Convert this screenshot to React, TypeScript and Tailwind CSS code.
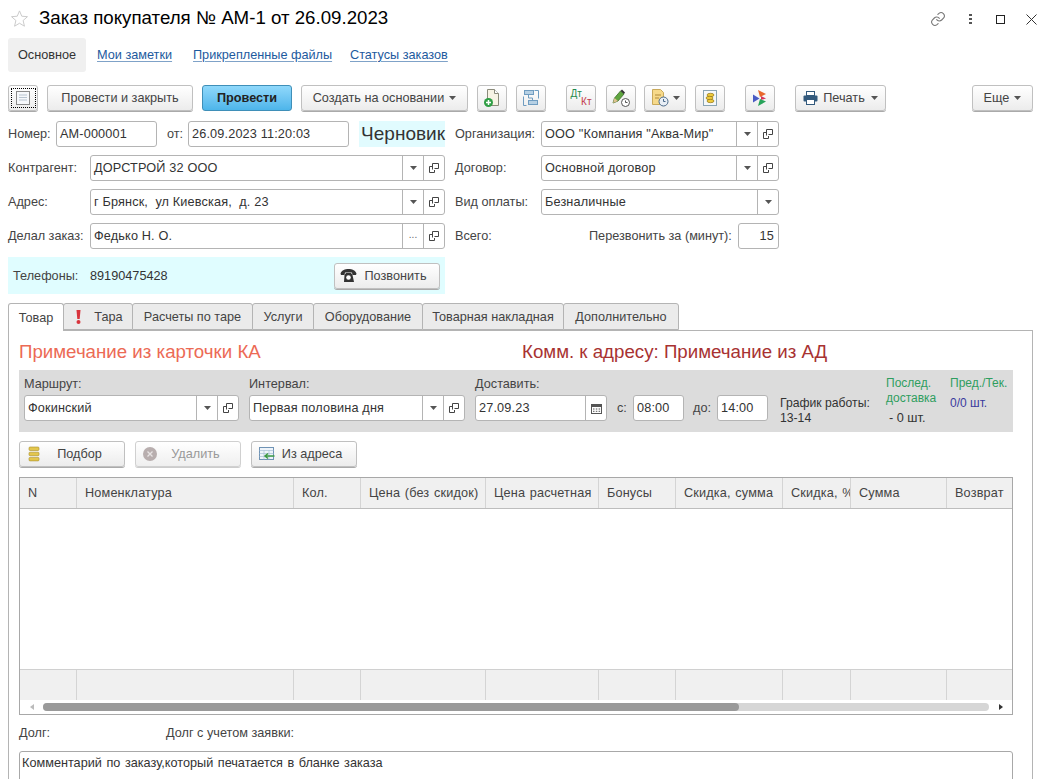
import React from "react";

const F = "font-['Liberation_Sans',Arial,sans-serif]";

function Caret({ className = "" }: { className?: string }) {
  return (
    <svg width="7" height="4" viewBox="0 0 7 4" className={className}>
      <path d="M0 0h7L3.5 4z" fill="#555" />
    </svg>
  );
}

function OpenIcon() {
  return (
    <svg width="10" height="10" viewBox="0 0 10 10" fill="none" stroke="#444" strokeWidth="1">
      <path d="M3.5 6.500V.5h6v5h-4" />
      <path d="M3.5 3.500H.5v6h5V7" />
    </svg>
  );
}

function Field({
  w,
  text,
  btns = [],
  right = false,
}: {
  w: string;
  text: string;
  btns?: string[];
  right?: boolean;
}) {
  return (
    <div className={`${w} h-[26px] flex shrink-0 rounded-[3px] border border-[#b4b4b4] bg-white text-[#333] overflow-hidden`}>
      <div className={`flex-1 min-w-0 pl-[3px] pr-[4px] leading-[24px] tracking-[0.15px] whitespace-pre ${right ? "text-right" : ""}`}>{text}</div>
      {btns.map((b, i) => (
        <div key={i} className="w-[21px] shrink-0 border-l border-[#b4b4b4] flex items-center justify-center">
          {b === "c" && <Caret />}
          {b === "o" && <OpenIcon />}
          {b === "d" && <span className="text-[10px] text-[#666] leading-none pb-[2px]">...</span>}
          {b === "k" && (
            <svg width="11" height="11" viewBox="0 0 11 11">
              <rect x="0.5" y="1.5" width="10" height="9" fill="none" stroke="#555" />
              <rect x="0.5" y="1.5" width="10" height="2.5" fill="#555" />
              <path d="M2 6h1.5M4.800 6h1.500M7.600 6h1.500M2 8.300h1.500M4.800 8.300h1.500M7.600 8.300h1.500" stroke="#555" />
            </svg>
          )}
        </div>
      ))}
    </div>
  );
}

function Btn({
  w,
  children,
  blue = false,
  disabled = false,
  className = "",
}: {
  w: string;
  children?: React.ReactNode;
  blue?: boolean;
  disabled?: boolean;
  className?: string;
}) {
  return (
    <div
      className={`${w} h-[26px] shrink-0 flex items-center justify-center rounded-[3px] border whitespace-nowrap ${
        blue
          ? "border-[#3f8fb8] bg-gradient-to-b from-[#8fd8fb] to-[#4db5ea] font-bold text-[#222]"
          : disabled
          ? "border-[#d0d0d0] bg-gradient-to-b from-[#ffffff] to-[#efefef] text-[#999] shadow-[0_1px_0_#ccc]"
          : "border-[#c0c0c0] bg-gradient-to-b from-[#ffffff] to-[#ececec] text-[#444] shadow-[0_1px_0_#aaa]"
      } ${className}`}
    >
      {children}
    </div>
  );
}

function Tab({ w, children, active = false }: { w: string; children: React.ReactNode; active?: boolean }) {
  return (
    <div
      className={`${w} shrink-0 flex items-center justify-center rounded-t-[3px] border border-[#b4b4b4] ${
        active ? "h-[28px] bg-white border-b-0 relative z-10 mb-[-1px]" : "h-[27px] bg-[#ebebeb] -ml-px"
      } text-[#444]`}
    >
      {children}
    </div>
  );
}

const cols = [
  { w: "w-[57px]", t: "N" },
  { w: "w-[217px]", t: "Номенклатура" },
  { w: "w-[67px]", t: "Кол." },
  { w: "w-[125px]", t: "Цена (без скидок)" },
  { w: "w-[113px]", t: "Цена расчетная" },
  { w: "w-[77px]", t: "Бонусы" },
  { w: "w-[107px]", t: "Скидка, сумма" },
  { w: "w-[68px]", t: "Скидка, %" },
  { w: "w-[96px]", t: "Сумма" },
  { w: "flex-1", t: "Возврат" },
];

export default function App() {
  return (
    <div className={`${F} w-[1037px] h-[779px] overflow-hidden bg-white text-[12.7px] leading-[20px] text-[#444] relative`}>
      {/* title */}
      <div className="h-[38px] flex items-center pl-[10px] pb-[2px]">
        <svg width="19" height="19" viewBox="0 0 20 20" fill="none" stroke="#c8c8c8" strokeWidth="1">
          <path d="M10 2l2.400 5.600 6 .5-4.600 4 1.400 6L10 15l-5.200 3.100 1.400-6-4.600-4 6-.5z" />
        </svg>
        <div className="ml-[10px] text-[18.7px] text-black">Заказ покупателя № АМ-1 от 26.09.2023</div>
        <div className="ml-auto flex items-center pt-[2px]">
          <svg width="16" height="16" viewBox="0 0 24 24" fill="none" stroke="#777" strokeWidth="1.600" strokeLinecap="round" className="mr-[23px]">
            <path d="M10 13a5 5 0 0 0 7.500.5l3-3a5 5 0 0 0-7-7l-1.700 1.700" />
            <path d="M14 11a5 5 0 0 0-7.500-.5l-3 3a5 5 0 0 0 7 7l1.700-1.700" />
          </svg>
          <div className="flex flex-col gap-[2px] mr-[24px]">
            <span className="w-[3px] h-[2px] bg-[#555]" />
            <span className="w-[3px] h-[2px] bg-[#555]" />
            <span className="w-[3px] h-[2px] bg-[#555]" />
          </div>
          <div className="w-[9px] h-[9px] border border-[#222] mr-[21px]" />
          <svg width="11" height="11" viewBox="0 0 11 11" stroke="#333" strokeWidth="1">
            <path d="M.5.5l10 10M10.500.5l-10 10" />
          </svg>
        </div>
      </div>

      {/* sections */}
      <div className="h-[34px] flex items-center pl-[8px]">
        <div className="w-[78px] h-[34px] rounded-[3px] bg-[#f0f0f0] flex items-center justify-center text-[#333]">Основное</div>
        <div className="ml-[11px] w-[96px]"><span className="text-[#1d5a9e] underline decoration-[#7fa2c8] underline-offset-2">Мои заметки</span></div>
        <div className="w-[157px]"><span className="text-[#1d5a9e] underline decoration-[#7fa2c8] underline-offset-2">Прикрепленные файлы</span></div>
        <div><span className="text-[#1d5a9e] underline decoration-[#7fa2c8] underline-offset-2">Статусы заказов</span></div>
      </div>

      {/* toolbar */}
      <div className="mt-[13px] h-[26px] flex items-center pl-[8px] pr-[4px]">
        <Btn w="w-[30px]">
          <div className="w-[25px] h-[20px] border border-dotted border-black flex items-center justify-center">
            <svg width="14" height="14" viewBox="0 0 14 14">
              <rect x="0.500" y="0.500" width="13" height="13" fill="#f6f8fb" stroke="#8a8a8a" />
              <path d="M3 4h8M3 6.500h8M3 9h8" stroke="#b8c4d0" />
            </svg>
          </div>
        </Btn>
        <Btn w="w-[146px]" className="ml-[9px]">Провести и закрыть</Btn>
        <Btn w="w-[90px]" blue className="ml-[9px]">Провести</Btn>
        <Btn w="w-[167px]" className="ml-[9px]">
          Создать на основании <Caret className="ml-[5px]" />
        </Btn>
        <Btn w="w-[30px]" className="ml-[9px]">
          <svg width="18" height="20" viewBox="0 0 18 20">
            <path d="M4.500 1.500h7l4 4v12h-11z" fill="#f7f3e4" stroke="#8a8a7a" />
            <path d="M11.500 1.500v4h4" fill="#fff" stroke="#8a8a7a" />
            <circle cx="5.500" cy="14.500" r="4.500" fill="#2f9e44" />
            <path d="M5.500 12v5M3 14.500h5" stroke="#fff" strokeWidth="1.500" />
          </svg>
        </Btn>
        <Btn w="w-[30px]" className="ml-[9px]">
          <svg width="18" height="18" viewBox="0 0 18 18" fill="none">
            <rect x="2.500" y="1.500" width="9" height="4" fill="#b6d0e4" stroke="#6f9cc0" />
            <rect x="6.500" y="11.500" width="9" height="4" fill="#b6d0e4" stroke="#6f9cc0" />
            <path d="M1.500 7.500v9h3M12.500 1.500h4v8" stroke="#6f9cc0" />
            <path d="M6.500 5.500v3.500h4v2.500" stroke="#6f9cc0" />
          </svg>
        </Btn>
        <Btn w="w-[30px]" className="ml-[20px]">
          <div className="relative w-[21px] h-[18px] text-[10px] leading-none">
            <span className="absolute left-0 top-0 text-[#1f8a4c]">Дт</span>
            <span className="absolute right-0 top-[8px] text-[#c23b4b]">Кт</span>
          </div>
        </Btn>
        <Btn w="w-[30px]" className="ml-[10px]">
          <svg width="20" height="20" viewBox="0 0 20 20">
            <path d="M2 15l1.500-5 6-7 3.500 3-6 7z" fill="#5fa53f" stroke="#3c6e2a" strokeWidth="0.800" />
            <path d="M9.500 3l1.500-1.500 3 3-1 1.500z" fill="#333" />
            <path d="M2 15l1.500-5 3.500 3z" fill="#e0c090" />
            <circle cx="14.500" cy="14.500" r="4" fill="#fff" stroke="#555" />
            <path d="M14.500 12.500v2h2" fill="none" stroke="#555" />
          </svg>
        </Btn>
        <Btn w="w-[42px]" className="ml-[8px]">
          <svg width="20" height="20" viewBox="0 0 20 20">
            <path d="M2.500 1.500h8l3 3v12h-11z" fill="#f6d98a" stroke="#c9a95a" />
            <path d="M5 7h6M5 10h4" stroke="#b08a3a" />
            <circle cx="13.500" cy="13.500" r="4.500" fill="#e8eef5" stroke="#4a6a8a" />
            <path d="M13.500 11v2.500h2" fill="none" stroke="#4a6a8a" />
          </svg>
          <Caret className="ml-[3px]" />
        </Btn>
        <Btn w="w-[30px]" className="ml-[9px]">
          <svg width="16" height="18" viewBox="0 0 16 18">
            <rect x="1.500" y="1.500" width="13" height="15" fill="#f4f8fa" stroke="#8aa5b5" />
            <ellipse cx="8.500" cy="6" rx="3.500" ry="1.700" fill="#eecb3c" stroke="#8f7218" strokeWidth="0.700" />
            <ellipse cx="7.500" cy="9" rx="3.500" ry="1.700" fill="#eecb3c" stroke="#8f7218" strokeWidth="0.700" />
            <ellipse cx="8.500" cy="12" rx="3.500" ry="1.700" fill="#eecb3c" stroke="#8f7218" strokeWidth="0.700" />
          </svg>
        </Btn>
        <Btn w="w-[30px]" className="ml-[20px]">
          <svg width="16" height="18" viewBox="0 0 16 18">
            <path d="M6 1l8 4-6 3z" fill="#e8682c" />
            <path d="M1 5.500L7.500 9.500 1 13.500z" fill="#4a5bc4" />
            <path d="M9 7l5 2.500L9 11z" fill="#d8365a" />
            <path d="M6 17l8-4.500-6-2.500z" fill="#27a35a" />
          </svg>
        </Btn>
        <Btn w="w-[91px]" className="ml-[20px]">
          <svg width="15" height="14" viewBox="0 0 15 14" className="mr-[5px]">
            <rect x="3.500" y="0.500" width="8" height="4" fill="#fff" stroke="#335a7d" />
            <rect x="0.500" y="4.500" width="14" height="6" rx="1" fill="#335a7d" />
            <rect x="3.500" y="8.500" width="8" height="5" fill="#fff" stroke="#335a7d" />
          </svg>
          Печать
          <Caret className="ml-[6px]" />
        </Btn>
        <Btn w="w-[61px]" className="ml-auto">
          Еще <Caret className="ml-[5px]" />
        </Btn>
      </div>

      {/* header form */}
      <div className="mt-[10px] flex pl-[8px]">
        <div className="w-[437px] flex flex-col gap-[8px]">
          <div className="flex items-center h-[26px]">
            <div className="w-[48px]">Номер:</div>
            <Field w="w-[101px]" text="АМ-000001" />
            <div className="w-[31px] pl-[10px]">от:</div>
            <Field w="w-[161px]" text="26.09.2023 11:20:03" />
            <div className="ml-[10px] w-[86px] h-[26px] bg-[#e1fbfe] text-[19px] leading-[26px] text-[#333] whitespace-nowrap text-right">Черновик</div>
          </div>
          <div className="flex items-center">
            <div className="w-[82px]">Контрагент:</div>
            <Field w="flex-1" text="ДОРСТРОЙ 32 ООО" btns={["c", "o"]} />
          </div>
          <div className="flex items-center">
            <div className="w-[82px]">Адрес:</div>
            <Field w="flex-1" text="г Брянск,  ул Киевская,  д. 23" btns={["c", "o"]} />
          </div>
          <div className="flex items-center">
            <div className="w-[82px]">Делал заказ:</div>
            <Field w="flex-1" text="Федько Н. О." btns={["d", "o"]} />
          </div>
          <div className="h-[37px] bg-[#e0fdff] flex items-center pl-[5px] pr-[5px]">
            <div className="w-[77px]">Телефоны:</div>
            <div className="text-[#333]">89190475428</div>
            <Btn w="w-[106px]" className="ml-auto">
              <svg width="17" height="15" viewBox="0 0 17 14" className="mr-[7px]">
                <path d="M.5 5C2 1.500 5 .5 8.500.5S15 1.500 16.500 5l-.5 1.500h-3.500L12 4H5l-.5 2.500H1z" fill="#333" />
                <path d="M4.500 6.500L6 4.500h5l1.500 2 1.500 7h-10z" fill="#333" />
                <circle cx="8.500" cy="9" r="2.300" fill="#fff" />
              </svg>
              <span className="mr-[7px]">Позвонить</span>
            </Btn>
          </div>
        </div>
        <div className="ml-[10px] w-[324px] flex flex-col gap-[8px] self-start">
          <div className="flex items-center">
            <div className="w-[86px]">Организация:</div>
            <Field w="flex-1" text={'ООО "Компания "Аква-Мир"'} btns={["c", "o"]} />
          </div>
          <div className="flex items-center">
            <div className="w-[86px]">Договор:</div>
            <Field w="flex-1" text="Основной договор" btns={["c", "o"]} />
          </div>
          <div className="flex items-center">
            <div className="w-[86px]">Вид оплаты:</div>
            <Field w="flex-1" text="Безналичные" btns={["c"]} />
          </div>
          <div className="flex items-center">
            <div className="w-[134px]">Всего:</div>
            <div className="flex-1">Перезвонить за (минут):</div>
            <Field w="w-[41px]" text="15" right />
          </div>
        </div>
      </div>

      {/* tabs */}
      <div className="mt-[9px] ml-[8px] flex items-end h-[27px]">
        <Tab w="w-[56px]" active>Товар</Tab>
        <Tab w="w-[70px]">
          <svg width="5" height="14" viewBox="0 0 5 14" className="ml-[3px] mr-[13px]">
            <path d="M.5 0h4l-.8 9H1.300z" fill="#d8343c" />
            <circle cx="2.500" cy="12" r="2" fill="#d8343c" />
          </svg>
          Тара
        </Tab>
        <Tab w="w-[121px]">Расчеты по таре</Tab>
        <Tab w="w-[62px]">Услуги</Tab>
        <Tab w="w-[110px]">Оборудование</Tab>
        <Tab w="w-[142px]">Товарная накладная</Tab>
        <Tab w="w-[116px]">Дополнительно</Tab>
      </div>

      {/* tab panel */}
      <div className="ml-[8px] w-[1025px] h-[460px] border border-[#b4b4b4] pl-[10px] pr-[19px]">
        <div className="h-[39px] flex items-center pt-[2px] text-[18.7px]">
          <div className="w-[503px] text-[#ec6a55]">Примечание из карточки КА</div>
          <div className="text-[#a83232] whitespace-nowrap">Комм. к адресу: Примечание из АД</div>
        </div>

        <div className="h-[62px] bg-[#dcdcdc] flex pl-[5px]">
          <div className="w-[225px] pt-[4px]">
            <div className="h-[21px]">Маршрут:</div>
            <Field w="w-[215px]" text="Фокинский" btns={["c", "o"]} />
          </div>
          <div className="w-[226px] pt-[4px]">
            <div className="h-[21px]">Интервал:</div>
            <Field w="w-[216px]" text="Первая половина дня" btns={["c", "o"]} />
          </div>
          <div className="w-[142px] pt-[4px]">
            <div className="h-[21px]">Доставить:</div>
            <Field w="w-[132px]" text="27.09.23" btns={["k"]} />
          </div>
          <div className="pt-[25px] flex items-center h-[51px]">
            <div className="w-[16px]">с:</div>
            <Field w="w-[51px]" text="08:00" />
            <div className="w-[33px] pl-[9px]">до:</div>
            <Field w="w-[51px]" text="14:00" />
          </div>
          <div className="ml-[12px] w-[106px] pt-[26px] text-[12.2px] leading-[15px] text-[#333]">
            <div>График работы:</div>
            <div>13-14</div>
          </div>
          <div className="w-[64px] pt-[6px] text-[12px] leading-[15px] text-[#2f9e5f]">
            <div>Послед.</div>
            <div>доставка</div>
            <div className="mt-[5px] pl-[3px] text-[12.7px] text-[#333]">- 0 шт.</div>
          </div>
          <div className="pt-[6px] text-[12px] leading-[15px] text-[#2f9e5f]">
            <div>Пред./Тек.</div>
            <div className="mt-[5px] text-[#3a3a9e]">0/0 шт.</div>
          </div>
        </div>

        <div className="mt-[9px] flex gap-[10px]">
          <Btn w="w-[106px]">
            <svg width="12" height="16" viewBox="0 0 12 16" className="mr-[17px]">
              <rect x="1" y="1" width="10" height="3.500" rx="1" fill="#e3c64d" stroke="#a88f2a" strokeWidth="0.600" />
              <rect x="1" y="6.200" width="10" height="3.500" rx="1" fill="#e3c64d" stroke="#a88f2a" strokeWidth="0.600" />
              <rect x="1" y="11.400" width="10" height="3.500" rx="1" fill="#e3c64d" stroke="#a88f2a" strokeWidth="0.600" />
            </svg>
            <span className="mr-[14px]">Подбор</span>
          </Btn>
          <Btn w="w-[106px]" disabled>
            <svg width="14" height="14" viewBox="0 0 14 14" className="mr-[14px]">
              <circle cx="7" cy="7" r="7" fill="#b8aeae" />
              <path d="M4.500 4.500l5 5M9.500 4.500l-5 5" stroke="#e8e4e4" strokeWidth="1.300" />
            </svg>
            <span className="mr-[13px]">Удалить</span>
          </Btn>
          <Btn w="w-[106px]">
            <svg width="16" height="14" viewBox="0 0 16 14" className="mr-[7px]">
              <rect x="0.500" y="0.500" width="14" height="12" fill="#eef4fa" stroke="#6f93b5" />
              <path d="M.5 3.500h14M.5 6.500h14M.5 9.500h14M5 3.500v9M10 3.500v9" stroke="#a9c0d5" strokeWidth="0.700" />
              <path d="M15.500 9H6M9 6.500L6 9l3 2.500" fill="none" stroke="#3d9a44" strokeWidth="1.500" />
            </svg>
            <span className="mr-[7px]">Из адреса</span>
          </Btn>
        </div>

        {/* table */}
        <div className="mt-[10px] h-[238px] border border-[#a8a8a8] flex flex-col">
          <div className="h-[31px] flex border-b border-[#bdbdbd] bg-[#f0f0f0]">
            {cols.map((c, i) => (
              <div key={i} className={`${c.w} pl-[8px] leading-[30px] tracking-[0.15px] overflow-hidden whitespace-nowrap [word-spacing:1px] border-r border-[#d4d4d4] last:border-r-0`}>
                {c.t}
              </div>
            ))}
          </div>
          <div className="flex-1" />
          <div className="h-[31px] flex border-t border-[#d0d0d0] bg-[#f0f0f0]">
            {cols.map((c, i) => (
              <div key={i} className={`${c.w} border-r border-[#d4d4d4] last:border-r-0`} />
            ))}
          </div>
          <div className="h-[14px] flex items-center">
            <div className="w-[23px] flex justify-center">
              <svg width="4" height="6" viewBox="0 0 4 6"><path d="M4 0v6L0 3z" fill="#bbb" /></svg>
            </div>
            <div className="flex-1 h-[8px] rounded-[4px] bg-[#d6d6d6]">
              <div className="w-[696px] h-[8px] rounded-[4px] bg-[#9a9a9a]" />
            </div>
            <div className="w-[23px] flex justify-center">
              <svg width="4" height="6" viewBox="0 0 4 6"><path d="M0 0v6l4-3z" fill="#333" /></svg>
            </div>
          </div>
        </div>

        <div className="h-[36px] flex items-center">
          <div className="w-[147px]">Долг:</div>
          <div>Долг с учетом заявки:</div>
        </div>
        <div className="h-[50px] rounded-t-[3px] border border-[#a8a8a8] pl-[2px] pt-[1px] text-[#333] [word-spacing:1px]">
          Комментарий по заказу,который печатается в бланке заказа
        </div>
      </div>
    </div>
  );
}
